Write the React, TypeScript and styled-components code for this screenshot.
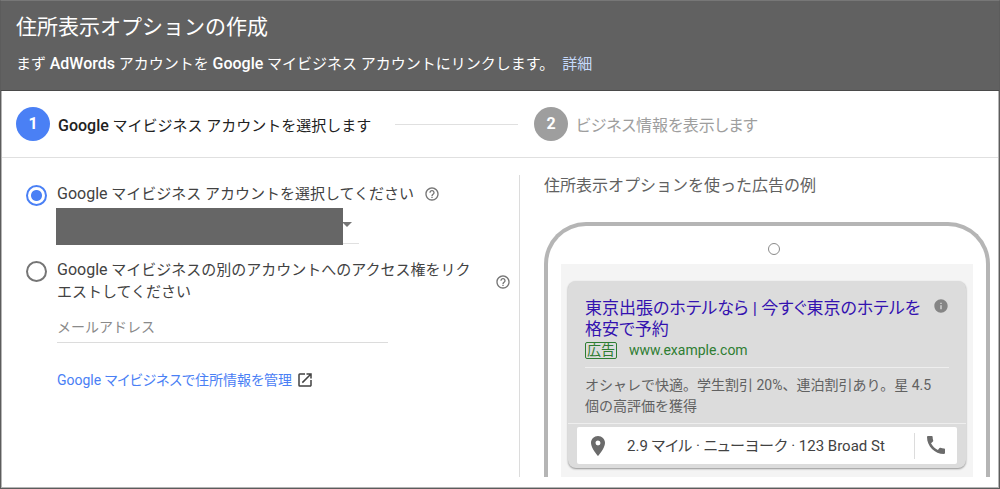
import React from "react";
import styled, { createGlobalStyle } from "styled-components";
import { MdCall, MdHelpOutline, MdInfo, MdOpenInNew, MdPlace } from "react-icons/md";

const GlobalStyle = createGlobalStyle`
  *, *::before, *::after { box-sizing: border-box; }
  body {
    margin: 0;
    background: #fff;
    color: #424242;
    font-family: Roboto, "Noto Sans CJK JP", sans-serif;
    font-size: 15px;
    line-height: 22px;
  }
  h1, h2, h3, p { margin: 0; font-weight: 400; }
  input, select, button { font: inherit; }
`;

const Frame = styled.div`
  display: flex;
  flex-direction: column;
  min-height: 100vh;
  border: 1px solid #5c5c5c;
  border-top-color: #777;
`;

const Header = styled.header`
  padding: 12px 15px 15px;
  background: #616161;
  border-bottom: 1px solid #4a4a4a;
  color: #fff;
`;

const Title = styled.h1`
  font-size: 21px;
  line-height: 28px;
`;

const Subtitle = styled.p`
  margin-top: 12px;
`;

const Latin = styled.span<{ $strong?: boolean }>`
  font-size: 16px;
  font-weight: ${(p) => (p.$strong ? 500 : 400)};
`;

const HeaderLink = styled.a`
  margin-left: 8px;
  color: #c6dafc;
  text-decoration: none;
`;

const Panel = styled.div`
  display: flex;
  flex: 1;
  flex-direction: column;
  border: 1px solid #b5b5b5;
  border-top: 0;
`;

const Steps = styled.ol`
  display: flex;
  align-items: center;
  margin: 0;
  padding: 16px 14px;
  list-style: none;
  border-bottom: 1px solid #e0e0e0;
`;

const Step = styled.li<{ $active?: boolean }>`
  display: flex;
  align-items: center;
  gap: 8px;
  flex: ${(p) => (p.$active ? "0 0 518px" : "1 1 0")};
  color: ${(p) => (p.$active ? "#212121" : "#9e9e9e")};
`;

const StepNumber = styled.span<{ $active?: boolean }>`
  display: flex;
  align-items: center;
  justify-content: center;
  width: 34px;
  height: 34px;
  border-radius: 50%;
  background: ${(p) => (p.$active ? "#4a80f5" : "#9e9e9e")};
  color: #fff;
  font-size: 16px;
  font-weight: 700;
`;

const StepLabel = styled.span`
  padding-top: 4px;
`;

const WideLabel = styled(StepLabel)`
  font-size: 16px;
  font-feature-settings: "palt";
`;

const StepLine = styled.span`
  flex: 1;
  height: 1px;
  margin: 0 16px;
  background: #e0e0e0;
`;

const Content = styled.main`
  display: flex;
  flex: 1;
  padding: 17px 8px 10px 24px;
`;

const Form = styled.form`
  flex: 0 0 494px;
  padding: 8px 8px 0 0;
  border-right: 1px solid #dcdcdc;
`;

const Option = styled.div<{ $spaced?: boolean }>`
  display: flex;
  align-items: flex-start;
  gap: 10px;
  margin-top: ${(p) => (p.$spaced ? "15px" : "0")};
`;

const Radio = styled.input`
  appearance: none;
  flex: none;
  width: 21px;
  height: 21px;
  margin: 2px 0 0;
  border: 2px solid #757575;
  border-radius: 50%;
  background: #fff;
  &:checked {
    border-color: #4a80f5;
    background: radial-gradient(circle, #4a80f5 5px, #fff 6px);
  }
`;

const OptionLabel = styled.label<{ $wide?: boolean }>`
  flex: ${(p) => (p.$wide ? "0 0 428px" : "none")};
`;

const HelpButton = styled.button<{ $low?: boolean }>`
  display: flex;
  align-self: ${(p) => (p.$low ? "center" : "flex-start")};
  margin: ${(p) => (p.$low ? "2px 0 0" : "3px 0 0")};
  padding: 0;
  border: 0;
  background: none;
  color: #757575;
`;

const Account = styled.div`
  position: relative;
  width: 302px;
  height: 38px;
  margin: 0 0 0 31px;
  border-bottom: 1px solid #e0e0e0;
`;

const AccountSelect = styled.select`
  appearance: none;
  width: 100%;
  height: 37px;
  border: 0;
  background: transparent;
`;

const Caret = styled.span`
  position: absolute;
  right: 7px;
  top: 16px;
  border: 5px solid transparent;
  border-top-color: #757575;
  border-bottom: 0;
  pointer-events: none;
`;

const Mask = styled.span`
  position: absolute;
  left: -1px;
  top: 2px;
  width: 287px;
  height: 37px;
  background: #666;
`;

const EmailInput = styled.input`
  display: block;
  width: 331px;
  height: 32px;
  margin: 8px 0 0 31px;
  padding: 0;
  border: 0;
  border-bottom: 1px solid #dcdcdc;
  background: transparent;
  font-size: 14px;
  &::placeholder { color: #8a8a8a; opacity: 1; }
`;

const ManageLink = styled.a`
  display: inline-flex;
  align-items: center;
  gap: 4px;
  margin: 26px 0 0 31px;
  color: #4a80f5;
  font-size: 14px;
  font-feature-settings: "palt";
  text-decoration: none;
  svg { color: #424242; }
`;

const Preview = styled.section`
  display: flex;
  flex: 1;
  flex-direction: column;
  min-width: 0;
  padding-left: 24px;
`;

const PreviewTitle = styled.h2`
  color: #616161;
  font-size: 16px;
  line-height: 22px;
`;

const Phone = styled.div`
  display: flex;
  flex: 1;
  flex-direction: column;
  margin-top: 25px;
  padding: 0 13px;
  border: 4px solid #b5b5b5;
  border-bottom: 0;
  border-radius: 42px 42px 0 0;
`;

const Speaker = styled.span`
  align-self: center;
  width: 12px;
  height: 12px;
  margin: 17px 0 9px 14px;
  border: 1px solid #8a8a8a;
  border-radius: 50%;
`;

const Screen = styled.div`
  flex: 1;
  padding: 17px 7px 9px;
  background: #f4f4f4;
`;

const Ad = styled.article`
  border-radius: 8px;
  background: #dcdcdc;
  box-shadow: 0 1px 2px rgba(0, 0, 0, 0.4);
`;

const AdBody = styled.div`
  padding: 17px 17px 6px;
  border-bottom: 1px solid #eee;
`;

const AdHead = styled.div`
  display: flex;
  justify-content: space-between;
  align-items: flex-start;
  color: #858585;
`;

const AdTitle = styled.h3`
  color: #3412b0;
  font-size: 17px;
  font-feature-settings: "palt";
  line-height: 21px;
`;

const AdSource = styled.p`
  display: flex;
  align-items: center;
  gap: 12px;
  padding-bottom: 7px;
  border-bottom: 1px solid #eee;
  color: #2e7d32;
  font-size: 14px;
  line-height: 20px;
`;

const AdBadge = styled.span`
  padding: 0 1px;
  border: 1px solid #2e7d32;
  border-radius: 2px;
  line-height: 15px;
`;

const AdText = styled.p`
  padding-top: 7px;
  color: #616161;
  font-size: 14px;
  line-height: 21px;
`;

const AdFooter = styled.div`
  padding: 3px 9px 4px;
`;

const Location = styled.div`
  display: flex;
  align-items: center;
  height: 37px;
  padding: 0 9px;
  border-radius: 2px;
  background: #fff;
  color: #6b6b6b;
`;

const Address = styled.span`
  flex: 1;
  margin-left: 17px;
  color: #424242;
  font-feature-settings: "palt";
`;

const CallButton = styled.button`
  display: flex;
  padding: 0 0 2px 9px;
  border: 0;
  border-left: 1px solid #dcdcdc;
  background: none;
  color: #6b6b6b;
`;

export default function App() {
  return (
    <>
      <GlobalStyle />
      <Frame>
        <Header>
          <Title>住所表示オプションの作成</Title>
          <Subtitle>
            まず <Latin $strong>AdWords</Latin> アカウントを <Latin $strong>Google</Latin>{" "}
            マイビジネス アカウントにリンクします。
            <HeaderLink href="#details">詳細</HeaderLink>
          </Subtitle>
        </Header>
        <Panel>
          <Steps>
            <Step $active>
              <StepNumber $active>1</StepNumber>
              <StepLabel>
                <Latin $strong>Google</Latin> マイビジネス アカウントを選択します
              </StepLabel>
              <StepLine />
            </Step>
            <Step>
              <StepNumber>2</StepNumber>
              <WideLabel>ビジネス情報を表示します</WideLabel>
            </Step>
          </Steps>
          <Content>
            <Form>
              <Option>
                <Radio type="radio" name="source" id="own" defaultChecked />
                <OptionLabel htmlFor="own">
                  <Latin>Google</Latin> マイビジネス アカウントを選択してください
                </OptionLabel>
                <HelpButton type="button" aria-label="ヘルプ"><MdHelpOutline size={16} /></HelpButton>
              </Option>
              <Account>
                <AccountSelect aria-label="アカウント" />
                <Caret />
                <Mask />
              </Account>
              <Option $spaced>
                <Radio type="radio" name="source" id="other" />
                <OptionLabel $wide htmlFor="other">
                  <Latin>Google</Latin> マイビジネスの別のアカウントへのアクセス権をリク
                  <br />
                  エストしてください
                </OptionLabel>
                <HelpButton $low type="button" aria-label="ヘルプ"><MdHelpOutline size={16} /></HelpButton>
              </Option>
              <EmailInput type="email" aria-label="メールアドレス" placeholder="メールアドレス" />
              <ManageLink href="#manage">
                Google マイビジネスで住所情報を管理
                <MdOpenInNew size={18} />
              </ManageLink>
            </Form>
            <Preview>
              <PreviewTitle>住所表示オプションを使った広告の例</PreviewTitle>
              <Phone>
                <Speaker />
                <Screen>
                  <Ad>
                    <AdBody>
                      <AdHead>
                        <AdTitle>
                          東京出張のホテルなら | 今すぐ東京のホテルを
                          <br />
                          格安で予約
                        </AdTitle>
                        <MdInfo size={16} />
                      </AdHead>
                      <AdSource>
                        <AdBadge>広告</AdBadge>
                        www.example.com
                      </AdSource>
                      <AdText>
                        オシャレで快適。学生割引 20%、連泊割引あり。星 4.5
                        <br />
                        個の高評価を獲得
                      </AdText>
                    </AdBody>
                    <AdFooter>
                      <Location>
                        <MdPlace size={24} />
                        <Address>2.9 マイル · ニューヨーク · 123 Broad St</Address>
                        <CallButton type="button" aria-label="電話"><MdCall size={24} /></CallButton>
                      </Location>
                    </AdFooter>
                  </Ad>
                </Screen>
              </Phone>
            </Preview>
          </Content>
        </Panel>
      </Frame>
    </>
  );
}
